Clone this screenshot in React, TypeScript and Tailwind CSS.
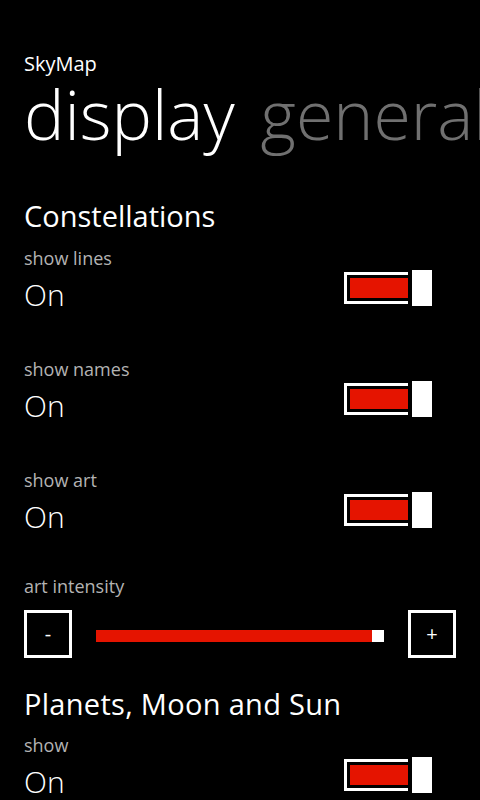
const font = { fontFamily: '"Open Sans", "Liberation Sans", sans-serif' };

function Toggle() {
  return (
    <div className="mt-[24px] flex items-center gap-[4px]">
      <div className="h-[32px] w-[64px] border-[3px] border-r-0 border-white py-[3px] pl-[3px]">
        <div className="h-full w-full bg-[#e51400]" />
      </div>
      <div className="h-[36px] w-[20px] bg-white" />
    </div>
  );
}

function ToggleRow({ label, className = "" }: { label: string; className?: string }) {
  return (
    <div className={`flex items-start justify-between pr-[48px] ${className}`}>
      <div>
        <div className="text-[18px] leading-[24px] text-[#b3b3b3]">{label}</div>
        <div className="mt-[7px] text-[30px] font-light leading-[36px] text-white">On</div>
      </div>
      <Toggle />
    </div>
  );
}

function StepButton({ sign }: { sign: string }) {
  return (
    <div className="flex h-[48px] w-[48px] items-center justify-center border-[3px] border-white text-[20px] leading-none text-white">
      {sign}
    </div>
  );
}

export default function App() {
  return (
    <div className="h-[800px] w-[480px] overflow-hidden bg-black pl-[24px] pt-[51px]" style={font}>
      <div className="text-[20px] leading-[26px] text-white">SkyMap</div>
      <div className="mt-[1px] flex gap-[26px] whitespace-nowrap text-[68px] font-light leading-[72px]">
        <span className="text-white">display</span>
        <span className="text-[#707070]">general</span>
      </div>

      <h2 className="mt-[48px] text-[29px] leading-[36px] text-white">Constellations</h2>
      <ToggleRow label="show lines" className="mt-[12px]" />
      <ToggleRow label="show names" className="mt-[44px]" />
      <ToggleRow label="show art" className="mt-[44px]" />

      <div className="mt-[39px] text-[18px] leading-[24px] text-[#b3b3b3]">art intensity</div>
      <div className="mt-[12px] flex items-start gap-[24px]">
        <StepButton sign="-" />
        <div className="mt-[20px] flex h-[12px] w-[288px]">
          <div className="flex-1 bg-[#e51400]" />
          <div className="w-[12px] bg-white" />
        </div>
        <StepButton sign="+" />
      </div>

      <h2 className="mt-[28px] text-[29px] leading-[36px] tracking-[0.3px] text-white">Planets, Moon and Sun</h2>
      <ToggleRow label="show" className="mt-[11px]" />
    </div>
  );
}
